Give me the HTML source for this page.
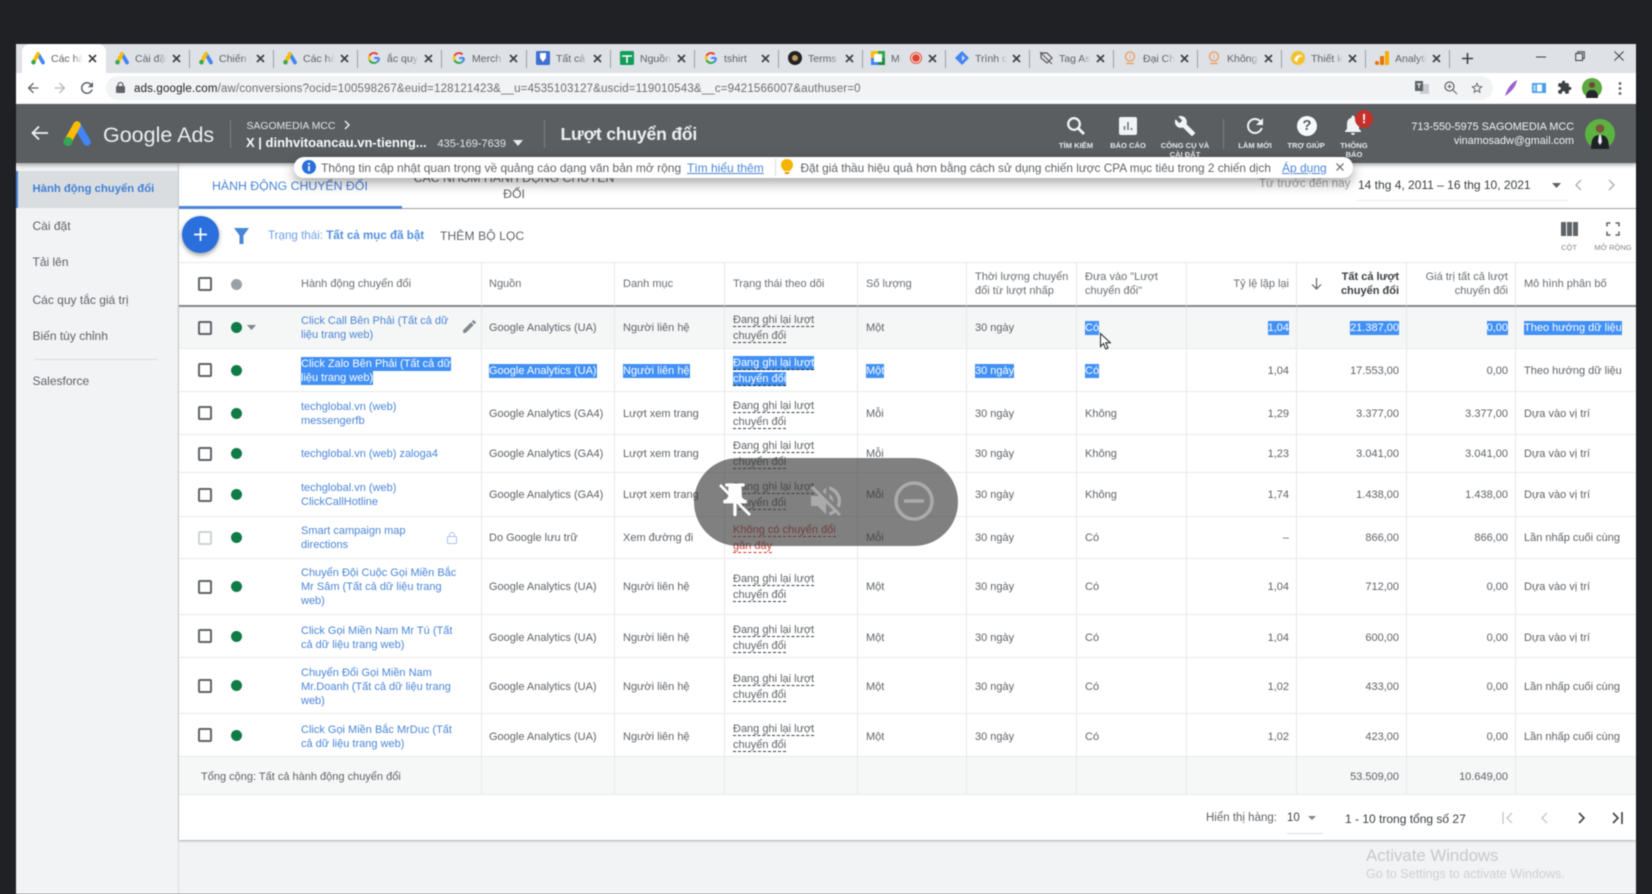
<!DOCTYPE html>
<html lang="vi"><head><meta charset="utf-8"><title>Google Ads</title>
<style>
*{box-sizing:border-box}
html,body{margin:0;padding:0;width:1652px;height:894px;overflow:hidden;background:#202124}
body{font-family:"Liberation Sans",Arial,sans-serif;color:#5f6368}
#w{position:absolute;left:0;top:0;width:1652px;height:894px;filter:blur(.45px);overflow:hidden}
.a{position:absolute;white-space:nowrap}
svg{position:absolute;overflow:visible}
.tab{position:absolute;top:44px;width:84px;height:29px}
.tab svg.f{left:9px;top:7px;width:14px;height:14px}
.tab span{position:absolute;left:29px;top:8px;width:32px;overflow:hidden;white-space:nowrap;font-size:10.5px;line-height:14px;color:#5f6368;-webkit-mask-image:linear-gradient(90deg,#000 70%,transparent)}
.tab svg.x{left:66px;top:10px;width:9px;height:9px}
.tab i{position:absolute;right:0;top:6px;height:18px;width:1px;background:#9aa0a6}
.lab{position:absolute;font-size:7.6px;font-weight:bold;color:#e8eaed;text-align:center;line-height:9px;width:60px;white-space:nowrap}
.side{position:absolute;left:32px;font-size:12px;line-height:16px;color:#5f6368;white-space:nowrap}
table{position:absolute;left:179px;top:262px;width:1457px;border-collapse:separate;border-spacing:0;table-layout:fixed;font-size:11px;background:#fff}
td,th{padding:1px 7px 0 8px;border-right:1px solid #e6e8ea;border-bottom:1px solid #e6e8ea;text-align:left;font-weight:normal;color:#5f6368;line-height:14px;white-space:nowrap;overflow:hidden}
td:first-child,th:first-child,td:nth-child(2),th:nth-child(2){padding-left:7px}
td:last-child,th:last-child{border-right:0}
th{border-bottom:2px solid #83878a;border-top:1px solid #e6e8ea;line-height:13.5px;font-size:11px;font-weight:normal;color:#6a6e72}
.r{text-align:right}
td.n,th.n{position:relative;padding-left:122px;color:#4a86d8;overflow:visible}
.cb{position:absolute;left:19px;top:50%;margin-top:-7px;width:14px;height:14px;border:2px solid #5f6368;border-radius:2px;background:#fff}
.dot{position:absolute;left:52px;top:50%;margin-top:-5.5px;width:11px;height:11px;border-radius:50%;background:#0f7b45}
.tr{line-height:16px}
.tr u{text-decoration:none;border-bottom:1px dashed #3c4043}
.tr.red{color:#d4453d}
.tr.red u{border-bottom-color:#d93025}
.s{background:#4190f5;color:#fff;padding:1px 0}
.tr .s u{border-bottom-color:#123}
.hov td{background:#f5f6f6}
.tot td{background:#f6f7f7}
.lo td{padding-top:3px}
</style></head><body><div id="w">

<svg width="0" height="0" style="position:absolute"><defs>
<symbol id="ads" viewBox="0 0 28 26"><path d="M14 5L24 22" stroke="#4285f4" stroke-width="7.5" stroke-linecap="round" fill="none"/><path d="M14 5L5 21" stroke="#fbbc04" stroke-width="7.5" stroke-linecap="round" fill="none"/><circle cx="5" cy="21.5" r="4.5" fill="#34a853"/></symbol>
<symbol id="g" viewBox="0 0 14 14"><path d="M12 7H7.2" stroke="#4285f4" stroke-width="2" fill="none"/><path d="M12 7a5 5 0 0 1-2 4" stroke="#4285f4" stroke-width="2" fill="none"/><path d="M10 11A5 5 0 0 1 2.5 9.2" stroke="#34a853" stroke-width="2" fill="none"/><path d="M2.5 9.2a5 5 0 0 1 0-4.4" stroke="#fbbc04" stroke-width="2" fill="none"/><path d="M2.5 4.8A5 5 0 0 1 10.5 3.4" stroke="#ea4335" stroke-width="2" fill="none"/></symbol>
<symbol id="x" viewBox="0 0 9 9"><path d="M1 1L8 8M8 1L1 8" stroke="#3c4043" stroke-width="1.7" fill="none"/></symbol>
</defs></svg>

<!-- window -->
<div class="a" style="left:16px;top:44px;width:1620px;height:29px;background:#dee1e6"></div>
<div class="a" style="left:22px;top:44px;width:84px;height:30px;background:#fff;border-radius:8px 8px 0 0"></div>
<div class="a" style="left:16px;top:73px;width:1620px;height:31px;background:#fff"></div>
<div class="a" style="left:106px;top:76px;width:1387px;height:24px;background:#f1f3f4;border-radius:12px"></div>

<div class="tab" style="left:22px"><svg class="f"><use href="#ads"/></svg><span>Các hành</span><svg class="x"><use href="#x"/></svg></div>
<div class="tab" style="left:106px"><svg class="f"><use href="#ads"/></svg><span>Cài đặt</span><svg class="x"><use href="#x"/></svg><i></i></div>
<div class="tab" style="left:190px"><svg class="f"><use href="#ads"/></svg><span>Chiến dịch</span><svg class="x"><use href="#x"/></svg><i></i></div>
<div class="tab" style="left:274px"><svg class="f"><use href="#ads"/></svg><span>Các hành</span><svg class="x"><use href="#x"/></svg><i></i></div>
<div class="tab" style="left:358px"><svg class="f"><use href="#g"/></svg><span>ắc quy</span><svg class="x"><use href="#x"/></svg><i></i></div>
<div class="tab" style="left:443px"><svg class="f"><use href="#g"/></svg><span>Merch</span><svg class="x"><use href="#x"/></svg><i></i></div>
<div class="tab" style="left:527px"><svg class="f" viewBox="0 0 14 14"><rect width="14" height="14" rx="1.5" fill="#3f6fd1"/><path d="M4 2h6v5L7 11 4 7z" fill="#fff"/></svg><span>Tất cả</span><svg class="x"><use href="#x"/></svg><i></i></div>
<div class="tab" style="left:611px"><svg class="f" viewBox="0 0 14 14"><rect width="14" height="14" rx="1.5" fill="#0f9d58"/><path d="M2 5h10M7 5v7" stroke="#fff" stroke-width="1.6"/></svg><span>Nguồn</span><svg class="x"><use href="#x"/></svg><i></i></div>
<div class="tab" style="left:695px"><svg class="f"><use href="#g"/></svg><span>tshirt</span><svg class="x"><use href="#x"/></svg><i></i></div>
<div class="tab" style="left:779px"><svg class="f" viewBox="0 0 14 14"><circle cx="7" cy="7" r="7" fill="#222"/><circle cx="7" cy="7" r="3" fill="#b99a5a"/></svg><span>Terms</span><svg class="x"><use href="#x"/></svg><i></i></div>
<div class="tab" style="left:862px"><svg class="f" viewBox="0 0 14 14"><rect width="7" height="7" fill="#fbbc04"/><rect x="7" width="7" height="7" fill="#34a853"/><rect y="7" width="7" height="7" fill="#4285f4"/><rect x="7" y="7" width="7" height="7" fill="#1e8e3e"/><rect x="3" y="3" width="8" height="8" fill="#fff"/></svg><span style="width:10px">Meet</span><svg style="left:48px;top:8px;width:12px;height:12px" viewBox="0 0 12 12"><circle cx="6" cy="6" r="5.5" fill="none" stroke="#e8593f"/><circle cx="6" cy="6" r="3.8" fill="#e8432e"/></svg><svg class="x"><use href="#x"/></svg><i></i></div>
<div class="tab" style="left:946px"><svg class="f" viewBox="0 0 14 14"><path d="M7 0L14 7 7 14 0 7z" fill="#4285f4"/><path d="M7 4L10 7 7 10z" fill="#cfe0fb"/></svg><span>Trình quản</span><svg class="x"><use href="#x"/></svg><i></i></div>
<div class="tab" style="left:1030px"><svg class="f" viewBox="0 0 14 14"><path d="M2 2h6l5 5-5 5-6-5z" fill="none" stroke="#555" stroke-width="1.2"/><path d="M1 1l12 12" stroke="#555"/></svg><span>Tag Assistant</span><svg class="x"><use href="#x"/></svg><i></i></div>
<div class="tab" style="left:1114px"><svg class="f" viewBox="0 0 14 14"><circle cx="7" cy="5.5" r="4.5" fill="none" stroke="#e89a5c" stroke-width="1.3"/><path d="M3 12.5h8" stroke="#e89a5c" stroke-width="1.3"/><path d="M7 3v5" stroke="#e8b58c"/></svg><span>Đại Chỉ</span><svg class="x"><use href="#x"/></svg><i></i></div>
<div class="tab" style="left:1198px"><svg class="f" viewBox="0 0 14 14"><circle cx="7" cy="5.5" r="4.5" fill="none" stroke="#e89a5c" stroke-width="1.3"/><path d="M3 12.5h8" stroke="#e89a5c" stroke-width="1.3"/><path d="M7 3v5" stroke="#e8b58c"/></svg><span>Không</span><svg class="x"><use href="#x"/></svg><i></i></div>
<div class="tab" style="left:1282px"><svg class="f" viewBox="0 0 14 14"><circle cx="7" cy="7" r="7" fill="#f2c230"/><path d="M3 9c3-6 6-6 9-3-3-1-5 0-6 5z" fill="#fff"/></svg><span>Thiết kế</span><svg class="x"><use href="#x"/></svg><i></i></div>
<div class="tab" style="left:1366px"><svg class="f" viewBox="0 0 14 14"><rect x="10" y="0" width="4" height="14" rx="1" fill="#f9ab00"/><rect x="5" y="5" width="4" height="9" rx="1" fill="#e37400"/><circle cx="2" cy="12" r="2" fill="#e37400"/></svg><span>Analytics</span><svg class="x"><use href="#x"/></svg><i></i></div>

<svg style="left:1461px;top:52px;width:13px;height:13px" viewBox="0 0 13 13"><path d="M6.5 1v11M1 6.5h11" stroke="#3c4043" stroke-width="1.6"/></svg>
<svg style="left:1536px;top:56px;width:10px;height:2px" viewBox="0 0 10 2"><path d="M0 1h10" stroke="#3c4043"/></svg>
<svg style="left:1575px;top:51px;width:10px;height:10px" viewBox="0 0 10 10"><path d="M.7 2.5h6.8v7H.7zM2.7 2.5V.7h6.6v6.8H7.5" fill="none" stroke="#3c4043"/></svg>
<svg style="left:1614px;top:51px;width:10px;height:10px" viewBox="0 0 10 10"><path d="M.5.5l9 9M9.500.5l-9 9" stroke="#3c4043"/></svg>

<!-- toolbar -->
<svg style="left:25px;top:80px;width:16px;height:16px" viewBox="0 0 24 24"><path d="M20 11H7.800l5.600-5.600L12 4l-8 8 8 8 1.400-1.400L7.800 13H20z" fill="#5f6368"/></svg>
<svg style="left:52px;top:80px;width:16px;height:16px" viewBox="0 0 24 24"><path d="M4 11h12.200l-5.600-5.600L12 4l8 8-8 8-1.400-1.400 5.600-5.600H4z" fill="#b5b8bb"/></svg>
<svg style="left:78px;top:79px;width:18px;height:18px" viewBox="0 0 24 24"><path d="M17.650 6.350C16.200 4.900 14.210 4 12 4c-4.420 0-7.990 3.580-7.990 8s3.570 8 7.990 8c3.730 0 6.840-2.550 7.730-6h-2.080c-.82 2.330-3.040 4-5.650 4-3.310 0-6-2.690-6-6s2.690-6 6-6c1.660 0 3.140.69 4.220 1.780L13 11h7V4l-2.350 2.350z" fill="#5f6368"/></svg>
<svg style="left:116px;top:82px;width:9px;height:11px" viewBox="0 0 9 11"><rect y="4" width="9" height="7" rx="1" fill="#5f6368"/><path d="M2 4.500V3a2.500 2.500 0 0 1 5 0v1.500" fill="none" stroke="#5f6368" stroke-width="1.200"/></svg>
<div class="a" style="left:134px;top:82px;font-size:11.500px;line-height:14px;color:#6b7075;letter-spacing:.17px"><span style="color:#202124">ads.google.com</span>/aw/conversions?ocid=100598267&amp;euid=128121423&amp;__u=4535103127&amp;uscid=119010543&amp;__c=9421566007&amp;authuser=0</div>

<svg style="left:1415px;top:81px;width:14px;height:14px" viewBox="0 0 14 14"><rect x="5" y="3" width="9" height="10" fill="#c9ccd0"/><rect x="0" y="0" width="8" height="10" fill="#5f6368"/><path d="M2 3h4M4 3v4" stroke="#fff"/></svg>
<svg style="left:1444px;top:81px;width:13px;height:13px" viewBox="0 0 13 13"><circle cx="5.500" cy="5.500" r="4.500" fill="none" stroke="#5f6368" stroke-width="1.200"/><path d="M9 9l4 4M3.500 5.500h4M5.500 3.500v4" stroke="#5f6368"/></svg>
<svg style="left:1470px;top:81px;width:14px;height:14px" viewBox="0 0 24 24"><path d="M22 9.240l-7.190-.62L12 2 9.190 8.630 2 9.240l5.460 4.730L5.820 21 12 17.270 18.180 21l-1.630-7.030L22 9.240zM12 15.400l-3.760 2.270 1-4.280-3.320-2.880 4.380-.38L12 6.100l1.710 4.040 4.380.38-3.320 2.880 1 4.280L12 15.400z" fill="#5f6368"/></svg>
<svg style="left:1504px;top:80px;width:13px;height:16px" viewBox="0 0 13 16"><path d="M1 16C3 9 7 3 13 0 12 7 7 12 1 16z" fill="#9c5fd1"/></svg>
<svg style="left:1532px;top:81px;width:14px;height:14px" viewBox="0 0 14 14"><path d="M0 2h14v10H0z" fill="#4a9fe8"/><rect x="5" y="3.500" width="5" height="7" fill="#fff"/><rect x="1.500" y="4" width="2" height="6" fill="#bfe0f8"/></svg>
<svg style="left:1557px;top:80px;width:15px;height:15px" viewBox="0 0 24 24"><path d="M20.500 11H19V7c0-1.100-.9-2-2-2h-4V3.500a2.500 2.500 0 0 0-5 0V5H4c-1.100 0-2 .9-2 2v3.800h1.500c1.500 0 2.700 1.200 2.700 2.700S5 16.200 3.500 16.200H2V20c0 1.100.9 2 2 2h3.800v-1.500c0-1.500 1.200-2.700 2.700-2.700s2.700 1.200 2.700 2.700V22H17c1.100 0 2-.9 2-2v-4h1.500a2.500 2.500 0 0 0 0-5z" fill="#3c4043"/></svg>
<svg style="left:1582px;top:78px;width:20px;height:20px" viewBox="0 0 20 20"><circle cx="10" cy="10" r="10" fill="#5da843"/><circle cx="10" cy="7" r="3" fill="#6a4a38"/><path d="M4 20c0-6 2-8 6-8s6 2 6 8z" fill="#23272b"/></svg>
<svg style="left:1618px;top:82px;width:4px;height:13px" viewBox="0 0 4 13"><circle cx="2" cy="1.500" r="1.400" fill="#5f6368"/><circle cx="2" cy="6.500" r="1.400" fill="#5f6368"/><circle cx="2" cy="11.500" r="1.400" fill="#5f6368"/></svg>

<!-- main backgrounds -->
<div class="a" style="left:16px;top:163px;width:1620px;height:731px;background:#f1f3f4"></div>
<div class="a" style="left:16px;top:163px;width:163px;height:731px;background:#f1f3f4;border-right:1px solid #dadce0"></div>
<div class="a" style="left:179px;top:163px;width:1457px;height:677px;background:#fff;box-shadow:0 1px 2px rgba(0,0,0,.3)"></div>
<div class="a" style="left:16px;top:171px;width:162px;height:37px;background:#dadde0;border-left:2px solid #4a86d8"></div>

<!-- sidebar -->
<div class="side" style="left:32.500px;top:181px;color:#3f7fd6;font-weight:bold;font-size:11.300px">Hành động chuyển đổi</div>
<div class="side" style="left:32.500px;top:218px">Cài đặt</div>
<div class="side" style="left:32.500px;top:254px">Tải lên</div>
<div class="side" style="left:32.500px;top:292px">Các quy tắc giá trị</div>
<div class="side" style="left:32.500px;top:328px">Biến tùy chỉnh</div>
<div class="a" style="left:35px;top:359px;width:122px;height:1px;background:#dadce0"></div>
<div class="side" style="left:32.500px;top:373px">Salesforce</div>

<!-- tabs -->
<div class="a" style="left:212px;top:178px;font-size:12.300px;line-height:16px;color:#4a86d8">HÀNH ĐỘNG CHUYỂN ĐỔI</div>
<div class="a" style="left:401px;top:170px;width:226px;text-align:center;font-size:12.300px;line-height:16px;color:#5f6368;white-space:normal">CÁC NHÓM HÀNH ĐỘNG CHUYỂN ĐỔI</div>
<div class="a" style="left:179px;top:208px;width:1457px;height:1px;background:#9b9fa3"></div>
<div class="a" style="left:179px;top:206px;width:223px;height:3px;background:#4a86d8"></div>

<div class="a" style="left:1259px;top:177px;font-size:11.700px;line-height:14px;color:#a0a4a8">Từ trước đến nay</div>
<div class="a" style="left:1358px;top:178px;font-size:12px;line-height:14px;color:#3c4043">14 thg 4, 2011 – 16 thg 10, 2021</div>
<svg style="left:1552px;top:183px;width:9px;height:5px" viewBox="0 0 9 5"><path d="M0 0h9L4.500 5z" fill="#5f6368"/></svg>
<svg style="left:1575px;top:179px;width:7px;height:12px" viewBox="0 0 7 12"><path d="M6 1L1 6l5 5" fill="none" stroke="#b0b3b6" stroke-width="1.500"/></svg>
<svg style="left:1608px;top:179px;width:7px;height:12px" viewBox="0 0 7 12"><path d="M1 1l5 5-5 5" fill="none" stroke="#b0b3b6" stroke-width="1.500"/></svg>
<div class="a" style="left:1357px;top:200px;width:211px;height:1px;background:#e8eaed"></div>

<!-- filter row -->
<div class="a" style="left:182px;top:216px;width:37px;height:37px;border-radius:50%;background:#2a6fdb;box-shadow:0 2px 5px rgba(0,0,0,.4)"></div>
<svg style="left:194px;top:228px;width:13px;height:13px" viewBox="0 0 13 13"><path d="M6.500 0v13M0 6.500h13" stroke="#fff" stroke-width="1.700"/></svg>
<svg style="left:234px;top:228px;width:15px;height:16px" viewBox="0 0 15 16"><path d="M0 0h15L9.500 7.500V16h-4V7.500z" fill="#4a86d8"/></svg>
<div class="a" style="left:268px;top:229px;font-size:11.600px;line-height:14px;color:#6da1e6">Trạng thái: <b style="color:#5490e0">Tất cả mục đã bật</b></div>
<div class="a" style="left:440px;top:229px;font-size:12px;line-height:15px;color:#5f6368;letter-spacing:.15px">THÊM BỘ LỌC</div>
<svg style="left:1561px;top:222px;width:17px;height:14px" viewBox="0 0 17 14"><path d="M0 0h5v14H0zM6 0h5v14H6zM12 0h5v14h-5z" fill="#5f6368"/></svg>
<svg style="left:1606px;top:222px;width:14px;height:14px" viewBox="0 0 14 14"><path d="M1 4.500V1h3.500M9.500 1H13v3.500M13 9.500V13H9.500M4.500 13H1V9.500" fill="none" stroke="#5f6368" stroke-width="1.500"/></svg>
<div class="a" style="left:1539px;top:243px;width:60px;text-align:center;font-size:7.500px;line-height:9px;color:#80868b">CỘT</div>
<div class="a" style="left:1583px;top:243px;width:60px;text-align:center;font-size:7.500px;line-height:9px;color:#80868b">MỞ RỘNG</div>

<!-- table -->
<table><colgroup><col style="width:303px"><col style="width:133px"><col style="width:110px"><col style="width:133px"><col style="width:109px"><col style="width:110px"><col style="width:110px"><col style="width:110px"><col style="width:110px"><col style="width:109px"><col style="width:120px"></colgroup>
<tr style="height:45px"><th class="n" style="color:#6a6e72"><span class="cb"></span><span class="dot" style="background:#9aa0a6"></span>Hành động chuyển đổi</th><th>Nguồn</th><th>Danh mục</th><th>Trạng thái theo dõi</th><th>Số lượng</th><th>Thời lượng chuyển<br>đổi từ lượt nhấp</th><th>Đưa vào "Lượt<br>chuyển đổi"</th><th class="r">Tỷ lệ lặp lại</th><th class="r" style="position:relative;color:#3c4043"><svg style="left:14px;top:15px;width:11px;height:12px" viewBox="0 0 11 12"><path d="M5.500 0v11M1 6.500l4.500 4.500L10 6.500" fill="none" stroke="#5f6368" stroke-width="1.200"/></svg><b>Tất cả lượt<br>chuyển đổi</b></th><th class="r">Giá trị tất cả lượt<br>chuyển đổi</th><th>Mô hình phân bố</th></tr>

<tr class="hov" style="height:42px"><td class="n"><span class="cb" style="background:#f5f6f6"></span><span class="dot"></span><svg style="left:68px;top:18px;width:9px;height:5px" viewBox="0 0 9 5"><path d="M0 0h9L4.500 5z" fill="#80868b"/></svg>Click Call Bên Phải (Tất cả dữ<br>liệu trang web)<svg style="left:282px;top:11px;width:17px;height:17px" viewBox="0 0 24 24"><path d="M3 17.250V21h3.750L17.810 9.940l-3.750-3.750L3 17.250zM20.710 7.040c.39-.39.39-1.020 0-1.410l-2.340-2.340c-.39-.39-1.020-.39-1.410 0l-1.830 1.830 3.750 3.750 1.830-1.830z" fill="#80868b"/></svg></td><td>Google Analytics (UA)</td><td>Người liên hệ</td><td><span class="tr"><u>Đang ghi lại lượt</u><br><u>chuyển đổi</u></span></td><td>Một</td><td>30 ngày</td><td><span class="s">Có</span></td><td class="r"><span class="s">1,04</span></td><td class="r"><span class="s">21.387,00</span></td><td class="r"><span class="s">0,00</span></td><td><span class="s">Theo hướng dữ liệu</span></td></tr>

<tr style="height:43px"><td class="n"><span class="cb"></span><span class="dot"></span><span class="s">Click Zalo Bên Phải (Tất cả dữ<br>liệu trang web)</span></td><td><span class="s">Google Analytics (UA)</span></td><td><span class="s">Người liên hệ</span></td><td><span class="tr"><span class="s"><u>Đang ghi lại lượt</u><br><u>chuyển đổi</u></span></span></td><td><span class="s">Một</span></td><td><span class="s">30 ngày</span></td><td><span class="s">Có</span></td><td class="r">1,04</td><td class="r">17.553,00</td><td class="r">0,00</td><td>Theo hướng dữ liệu</td></tr>

<tr style="height:43px"><td class="n"><span class="cb"></span><span class="dot"></span>techglobal.vn (web)<br>messengerfb</td><td>Google Analytics (GA4)</td><td>Lượt xem trang</td><td><span class="tr"><u>Đang ghi lại lượt</u><br><u>chuyển đổi</u></span></td><td>Mỗi</td><td>30 ngày</td><td>Không</td><td class="r">1,29</td><td class="r">3.377,00</td><td class="r">3.377,00</td><td>Dựa vào vị trí</td></tr>

<tr style="height:38px"><td class="n"><span class="cb"></span><span class="dot"></span>techglobal.vn (web) zaloga4</td><td>Google Analytics (GA4)</td><td>Lượt xem trang</td><td><span class="tr"><u>Đang ghi lại lượt</u><br><u>chuyển đổi</u></span></td><td>Mỗi</td><td>30 ngày</td><td>Không</td><td class="r">1,23</td><td class="r">3.041,00</td><td class="r">3.041,00</td><td>Dựa vào vị trí</td></tr>

<tr style="height:44px"><td class="n"><span class="cb"></span><span class="dot"></span>techglobal.vn (web)<br>ClickCallHotline</td><td>Google Analytics (GA4)</td><td>Lượt xem trang</td><td><span class="tr"><u>Đang ghi lại lượt</u><br><u>chuyển đổi</u></span></td><td>Mỗi</td><td>30 ngày</td><td>Không</td><td class="r">1,74</td><td class="r">1.438,00</td><td class="r">1.438,00</td><td>Dựa vào vị trí</td></tr>

<tr style="height:42px"><td class="n"><span class="cb" style="border-color:#cfd2d5"></span><span class="dot"></span>Smart campaign map<br>directions<svg style="left:267px;top:14px;width:12px;height:14px" viewBox="0 0 12 14"><rect x="1.500" y="5.500" width="9" height="7" rx="1" fill="none" stroke="#a8c4ee"/><path d="M3.500 5.500V4a2.500 2.500 0 0 1 5 0v1.500" fill="none" stroke="#a8c4ee"/></svg></td><td>Do Google lưu trữ</td><td>Xem đường đi</td><td><span class="tr red"><u>Không có chuyển đổi</u><br><u>gần đây</u></span></td><td>Mỗi</td><td>30 ngày</td><td>Có</td><td class="r">–</td><td class="r">866,00</td><td class="r">866,00</td><td>Lần nhấp cuối cùng</td></tr>

<tr style="height:56px"><td class="n"><span class="cb"></span><span class="dot"></span>Chuyển Đội Cuộc Gọi Miền Bắc<br>Mr Sâm (Tất cả dữ liệu trang<br>web)</td><td>Google Analytics (UA)</td><td>Người liên hệ</td><td><span class="tr"><u>Đang ghi lại lượt</u><br><u>chuyển đổi</u></span></td><td>Một</td><td>30 ngày</td><td>Có</td><td class="r">1,04</td><td class="r">712,00</td><td class="r">0,00</td><td>Dựa vào vị trí</td></tr>

<tr class="lo" style="height:43px"><td class="n"><span class="cb"></span><span class="dot"></span>Click Gọi Miền Nam Mr Tú (Tất<br>cả dữ liệu trang web)</td><td>Google Analytics (UA)</td><td>Người liên hệ</td><td><span class="tr"><u>Đang ghi lại lượt</u><br><u>chuyển đổi</u></span></td><td>Một</td><td>30 ngày</td><td>Có</td><td class="r">1,04</td><td class="r">600,00</td><td class="r">0,00</td><td>Dựa vào vị trí</td></tr>

<tr class="lo" style="height:56px"><td class="n"><span class="cb"></span><span class="dot"></span>Chuyển Đổi Gọi Miền Nam<br>Mr.Doanh (Tất cả dữ liệu trang<br>web)</td><td>Google Analytics (UA)</td><td>Người liên hệ</td><td><span class="tr"><u>Đang ghi lại lượt</u><br><u>chuyển đổi</u></span></td><td>Một</td><td>30 ngày</td><td>Có</td><td class="r">1,02</td><td class="r">433,00</td><td class="r">0,00</td><td>Lần nhấp cuối cùng</td></tr>

<tr class="lo" style="height:43px"><td class="n"><span class="cb"></span><span class="dot"></span>Click Gọi Miền Bắc MrDuc (Tất<br>cả dữ liệu trang web)</td><td>Google Analytics (UA)</td><td>Người liên hệ</td><td><span class="tr"><u>Đang ghi lại lượt</u><br><u>chuyển đổi</u></span></td><td>Một</td><td>30 ngày</td><td>Có</td><td class="r">1,02</td><td class="r">423,00</td><td class="r">0,00</td><td>Lần nhấp cuối cùng</td></tr>

<tr class="tot lo" style="height:38px"><td style="padding-left:22px">Tổng cộng: Tất cả hành động chuyển đổi</td><td></td><td></td><td></td><td></td><td></td><td></td><td></td><td class="r">53.509,00</td><td class="r">10.649,00</td><td></td></tr>
</table>

<!-- pagination -->
<div class="a" style="left:1206px;top:811px;font-size:11.500px;line-height:14px;color:#5f6368">Hiển thị hàng:</div>
<div class="a" style="left:1287px;top:811px;font-size:11.500px;line-height:14px;color:#3c4043">10</div>
<svg style="left:1308px;top:816px;width:8px;height:4px" viewBox="0 0 8 4"><path d="M0 0h8L4 4z" fill="#80868b"/></svg>
<div class="a" style="left:1287px;top:833px;width:36px;height:1px;background:#dadce0"></div>
<div class="a" style="left:1345px;top:812px;font-size:12px;line-height:14px;color:#3c4043">1 - 10 trong tổng số 27</div>
<svg style="left:1502px;top:812px;width:11px;height:12px" viewBox="0 0 11 12"><path d="M1 0v12M10 1L5 6l5 5" fill="none" stroke="#c4c7ca" stroke-width="1.400"/></svg>
<svg style="left:1541px;top:812px;width:7px;height:12px" viewBox="0 0 7 12"><path d="M6 1L1 6l5 5" fill="none" stroke="#c4c7ca" stroke-width="1.400"/></svg>
<svg style="left:1578px;top:812px;width:7px;height:12px" viewBox="0 0 7 12"><path d="M1 1l5 5-5 5" fill="none" stroke="#3c4043" stroke-width="1.600"/></svg>
<svg style="left:1612px;top:812px;width:11px;height:12px" viewBox="0 0 11 12"><path d="M10 0v12M1 1l5 5-5 5" fill="none" stroke="#3c4043" stroke-width="1.600"/></svg>

<div class="a" style="left:1366px;top:846px;font-size:16.800px;line-height:19px;color:#c6c9cb">Activate Windows</div>
<div class="a" style="left:1366px;top:867px;font-size:12.600px;line-height:14px;color:#cdd0d2">Go to Settings to activate Windows.</div>

<!-- header -->
<div class="a" style="left:16px;top:104px;width:1620px;height:59px;background:#5a5e60;box-shadow:0 2px 4px rgba(0,0,0,.35)"></div>
<svg style="left:31px;top:125px;width:18px;height:16px" viewBox="0 0 18 16"><path d="M17 8H2M8 1.500L1.500 8 8 14.500" fill="none" stroke="#f1f3f4" stroke-width="1.800"/></svg>
<svg style="left:63px;top:120px;width:28px;height:26px"><use href="#ads"/></svg>
<div class="a" style="left:103px;top:122px;font-size:21.500px;line-height:26px;color:#eceef0">Google Ads</div>
<div class="a" style="left:230px;top:120px;width:1px;height:28px;background:#7a7e81"></div>
<div class="a" style="left:246.500px;top:120px;font-size:10.400px;line-height:13px;color:#e4e6e8">SAGOMEDIA MCC</div>
<svg style="left:344px;top:120px;width:7px;height:10px" viewBox="0 0 7 10"><path d="M1 1l4 4-4 4" fill="none" stroke="#f1f3f4" stroke-width="1.400"/></svg>
<div class="a" style="left:246px;top:135px;font-size:13px;line-height:16px;font-weight:bold;color:#f8f9fa">X | dinhvitoancau.vn-tienng...</div>
<div class="a" style="left:437.500px;top:137px;font-size:11px;line-height:14px;color:#e4e6e8">435-169-7639</div>
<svg style="left:513px;top:140px;width:10px;height:6px" viewBox="0 0 10 6"><path d="M0 0h10L5 6z" fill="#e8eaed"/></svg>
<div class="a" style="left:544px;top:120px;width:1px;height:28px;background:#7a7e81"></div>
<div class="a" style="left:560.500px;top:123px;font-size:17.600px;line-height:22px;font-weight:bold;color:#eceef0;letter-spacing:-.2px">Lượt chuyển đổi</div>

<svg style="left:1066px;top:116px;width:20px;height:20px" viewBox="0 0 20 20"><circle cx="8" cy="8" r="5.800" fill="none" stroke="#f1f3f4" stroke-width="2.300"/><path d="M12.500 12.500L18 18" stroke="#f1f3f4" stroke-width="2.800"/></svg>
<div class="lab" style="left:1046px;top:141px">TÌM KIẾM</div>
<svg style="left:1119px;top:117px;width:18px;height:18px" viewBox="0 0 18 18"><rect width="18" height="18" rx="2" fill="#f1f3f4"/><path d="M5.500 9v4M9 5v8M12.500 11v2" stroke="#5a5e60" stroke-width="1.300"/></svg>
<div class="lab" style="left:1098px;top:141px">BÁO CÁO</div>
<svg style="left:1174px;top:115px;width:22px;height:22px" viewBox="0 0 24 24"><path d="M22.700 19l-9.100-9.100c.9-2.300.4-5-1.500-6.900-2-2-5-2.400-7.400-1.300L9 6 6 9 1.600 4.700C.4 7.100.9 10.100 2.900 12.100c1.900 1.900 4.600 2.400 6.900 1.500l9.100 9.100c.4.4 1 .4 1.400 0l2.300-2.300c.5-.4.500-1.100.1-1.400z" fill="#f1f3f4"/></svg>
<div class="lab" style="left:1155px;top:141px">CÔNG CỤ VÀ<br>CÀI ĐẶT</div>
<div class="a" style="left:1223px;top:119px;width:1px;height:30px;background:#7a7e81"></div>
<svg style="left:1243px;top:114px;width:24px;height:24px" viewBox="0 0 24 24"><path d="M17.650 6.350C16.200 4.900 14.210 4 12 4c-4.420 0-7.990 3.580-7.990 8s3.570 8 7.990 8c3.730 0 6.840-2.550 7.730-6h-2.080c-.82 2.330-3.040 4-5.650 4-3.310 0-6-2.690-6-6s2.690-6 6-6c1.660 0 3.140.69 4.220 1.780L13 11h7V4l-2.350 2.350z" fill="#f1f3f4"/></svg>
<div class="lab" style="left:1225px;top:141px">LÀM MỚI</div>
<svg style="left:1297px;top:116px;width:20px;height:20px" viewBox="0 0 20 20"><circle cx="10" cy="10" r="10" fill="#f8f9fa"/></svg>
<div class="a" style="left:1297px;top:116px;width:20px;text-align:center;font-size:15px;line-height:20px;font-weight:bold;color:#5a5e60">?</div>
<div class="lab" style="left:1276px;top:141px">TRỢ GIÚP</div>
<svg style="left:1341px;top:113px;width:24px;height:24px" viewBox="0 0 24 24"><path d="M12 22c1.100 0 2-.9 2-2h-4c0 1.100.9 2 2 2zm6-6v-5c0-3.070-1.630-5.640-4.500-6.320V4c0-.83-.67-1.500-1.500-1.500s-1.500.67-1.500 1.500v.68C7.640 5.360 6 7.920 6 11v5l-2 2v1h16v-1l-2-2z" fill="#f1f3f4"/></svg>
<svg style="left:1355px;top:110px;width:18px;height:18px" viewBox="0 0 18 18"><circle cx="9" cy="9" r="9" fill="#c5302c"/></svg>
<div class="a" style="left:1355px;top:110px;width:18px;text-align:center;font-size:13px;line-height:18px;font-weight:bold;color:#fff">!</div>
<div class="lab" style="left:1324px;top:141px">THÔNG<br>BÁO</div>
<div class="a" style="left:1374px;width:200px;top:120px;text-align:right;font-size:10.800px;line-height:14px;color:#f1f3f4">713-550-5975 SAGOMEDIA MCC<br>vinamosadw@gmail.com</div>
<svg style="left:1585px;top:119px;width:30px;height:30px" viewBox="0 0 30 30"><circle cx="15" cy="15" r="15" fill="#5cb340"/><circle cx="15" cy="9.500" r="4.300" fill="#7a5540"/><path d="M6 30c0-11 3-14 9-14s9 3 9 14z" fill="#1e2226"/><path d="M14 16h2l1 7-2 3-2-3z" fill="#e8eaed"/></svg>

<!-- banner -->
<div class="a" style="left:294px;top:157px;width:1059px;height:21px;background:#fff;border-radius:10px;box-shadow:0 5px 12px rgba(0,0,0,.35)"></div>
<svg style="left:302px;top:160px;width:14px;height:14px" viewBox="0 0 14 14"><circle cx="7" cy="7" r="7" fill="#2a6fdb"/><path d="M7 6v5" stroke="#fff" stroke-width="1.800"/><circle cx="7" cy="3.800" r="1.100" fill="#fff"/></svg>
<div class="a" style="left:321px;top:161px;font-size:12px;line-height:14px;color:#5f6368">Thông tin cập nhật quan trọng về quảng cáo dạng văn bản mở rộng</div>
<div class="a" style="left:687px;top:161px;font-size:12px;line-height:14px;color:#4a86d8;text-decoration:underline">Tìm hiểu thêm</div>
<div class="a" style="left:775px;top:159px;width:1px;height:17px;background:#dadce0"></div>
<svg style="left:781px;top:159px;width:12px;height:16px" viewBox="0 0 12 16"><path d="M6 0a6 6 0 0 1 3.500 10.900V12h-7v-1.100A6 6 0 0 1 6 0z" fill="#f5b400"/><rect x="3.500" y="13" width="5" height="2" rx="1" fill="#e09b00"/></svg>
<div class="a" style="left:800.500px;top:161px;font-size:11.820px;line-height:14px;color:#5f6368">Đặt giá thầu hiệu quả hơn bằng cách sử dụng chiến lược CPA mục tiêu trong 2 chiến dịch</div>
<div class="a" style="left:1282px;top:161px;font-size:12px;line-height:14px;color:#4a86d8;text-decoration:underline">Áp dụng</div>
<svg style="left:1336px;top:163px;width:8px;height:8px" viewBox="0 0 8 8"><path d="M.5.500l7 7M7.500.500l-7 7" stroke="#5f6368" stroke-width="1.200"/></svg>

<!-- cursor -->
<svg style="left:1100px;top:333px;width:12px;height:17px" viewBox="0 0 12 17"><path d="M.5.500v13l3-3 2.200 5.500 2.300-1-2.200-5.200h4.500z" fill="#fff" stroke="#222" stroke-width="1"/></svg>

<!-- overlay pill -->
<div class="a" style="left:694px;top:458px;width:264px;height:88px;border-radius:44px;background:rgba(60,60,60,.65)"></div>
<svg style="left:715px;top:480px;width:40px;height:40px" viewBox="0 0 24 24"><path d="M16 9V4h1c.55 0 1-.45 1-1s-.45-1-1-1H7c-.55 0-1 .45-1 1s.45 1 1 1h1v5c0 1.660-1.340 3-3 3v2h5.970v7l1 1 1-1v-7H19v-2c-1.660 0-3-1.340-3-3z" fill="#fff"/><path d="M3 3l18 18" stroke="#fff" stroke-width="1.600"/></svg>
<svg style="left:806px;top:481px;width:40px;height:40px" viewBox="0 0 24 24"><path d="M16.500 12c0-1.770-1.020-3.290-2.500-4.030v2.210l2.450 2.450c.03-.2.050-.41.050-.63zm2.500 0c0 .94-.2 1.820-.54 2.640l1.510 1.510C20.630 14.910 21 13.500 21 12c0-4.280-2.990-7.860-7-8.770v2.060c2.890.86 5 3.540 5 6.710zM4.270 3L3 4.270 7.730 9H3v6h4l5 5v-6.730l4.250 4.250c-.67.52-1.420.93-2.250 1.180v2.060c1.380-.31 2.630-.95 3.690-1.810L19.730 21 21 19.730l-9-9L4.270 3zM12 4L9.910 6.090 12 8.180V4z" fill="#ababab"/></svg>
<svg style="left:894px;top:481px;width:40px;height:40px" viewBox="0 0 40 40"><circle cx="20" cy="20" r="18" fill="none" stroke="#ababab" stroke-width="3.500"/><path d="M10 20h20" stroke="#ababab" stroke-width="3.500"/></svg>

</div></body></html>
